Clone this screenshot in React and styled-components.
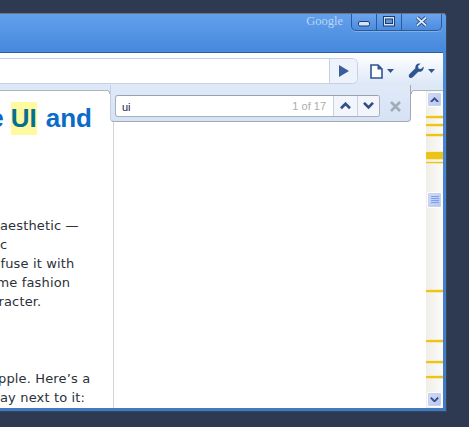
import React from "react";
import styled, { createGlobalStyle } from "styled-components";

const Global = createGlobalStyle`
  html, body { margin: 0; padding: 0; width: 469px; height: 427px; overflow: hidden; background: #2d3a52; }
  #root { width: 469px; height: 427px; }
`;

const Desktop = styled.div`
  width: 469px;
  height: 427px;
  padding-top: 13px;
  box-sizing: border-box;
  background: #2d3a52;
  overflow: hidden;
`;

const Win = styled.div`
  width: 447px;
  height: 399px;
  box-sizing: border-box;
  display: flex;
  flex-direction: column;
  background: linear-gradient(#4a8cdc, #3f7ac6);
  border-top: 1px solid #6d7480;
  border-right: 1px solid #3a4556;
  border-bottom: 1px solid #3a4556;
  border-top-right-radius: 4px;
`;

const TitleBar = styled.div`
  height: 38px;
  flex: none;
  display: flex;
  justify-content: flex-end;
  align-items: flex-start;
  background: linear-gradient(#62a0ec, #4688dc);
  border-top-right-radius: 3px;
  padding-right: 4px;
  box-sizing: border-box;
`;

const Brand = styled.span`
  font-family: "Liberation Serif", serif;
  font-size: 12.5px;
  color: #bcd5f3;
  margin: 0 8px 0 0;
`;

const WinButtons = styled.div`
  display: flex;
  height: 16px;
  box-sizing: content-box;
  border: 1px solid #2b5a9a;
  border-top: none;
  border-radius: 0 0 5px 5px;
  background: linear-gradient(#6ba5ec, #4c8bdd);
  box-shadow: 0 1px 0 #7fb0ee;
`;

const WinButton = styled.div`
  width: ${p => p.$w}px;
  box-sizing: border-box;
  display: flex;
  align-items: flex-end;
  justify-content: center;
  padding-bottom: 3px;
  & + & { border-left: 1px solid #2b5a9a; }
`;

const Body = styled.div`
  flex: 1;
  min-height: 0;
  display: flex;
  flex-direction: column;
  margin-right: 3px;
  margin-bottom: 3px;
  border-top: 1px solid #2f5f9e;
  position: relative;
`;

const Toolbar = styled.div`
  height: 32px;
  flex: none;
  box-sizing: border-box;
  display: flex;
  align-items: flex-start;
  padding-top: 5px;
  background: linear-gradient(#ffffff, #dde8f7);
`;

const Omnibox = styled.div`
  width: 358px;
  height: 26px;
  flex: none;
  box-sizing: border-box;
  display: flex;
  justify-content: flex-end;
  background: #fff;
  border: 1px solid #c6d1e6;
  border-left: none;
  border-radius: 0 6px 6px 0;
`;

const GoButton = styled.div`
  width: 27px;
  display: flex;
  align-items: center;
  justify-content: center;
  background: #eef3fb;
  border-left: 1px solid #c6d1e6;
  border-radius: 0 5px 5px 0;
`;

const ToolIcon = styled.div`
  display: flex;
  align-items: center;
  gap: ${p => p.$gap}px;
  height: 26px;
  margin-left: ${p => p.$ml}px;
`;

const Content = styled.div`
  flex: 1;
  min-height: 0;
  display: flex;
  background: #dde8f7;
  position: relative;
`;

const Page = styled.div`
  flex: 1;
  min-width: 0;
  margin-top: 5px;
  background: #fff;
  display: flex;
  justify-content: space-between;
  border-top: 1px solid #b0b4bc;
  overflow: hidden;
`;

const Article = styled.div`
  width: 114px;
  flex: none;
  box-sizing: border-box;
  border-right: 1px solid #d4d4d4;
  overflow: hidden;
`;

const Heading = styled.div`
  display: flex;
  justify-content: flex-end;
  gap: 7px;
  margin-top: 11px;
  padding-right: 21px;
  white-space: nowrap;
  font: bold 26px/33px "Liberation Sans", sans-serif;
  color: #0a6cc8;
`;

const Mark = styled.span`
  background: #fff9a0;
  color: #056f90;
  margin-right: 2px;
`;

const Para = styled.div`
  margin-top: ${p => p.$mt}px;
  font: 13px/19px "DejaVu Sans", sans-serif;
  letter-spacing: 0.15px;
  color: #2c3038;
`;

const Line = styled.div`
  white-space: nowrap;
  margin-left: ${p => p.$x || 0}px;
`;

const Scrollbar = styled.div`
  width: 17px;
  flex: none;
  box-sizing: border-box;
  padding: 1px;
  position: relative;
  display: flex;
  flex-direction: column;
  justify-content: space-between;
  background: linear-gradient(90deg, #f0eee8, #fcfbf8);
`;

const Tick = styled.div`
  position: absolute;
  left: 0;
  right: 0;
  top: ${p => p.$y}px;
  height: ${p => p.$h}px;
  background: #ecc319;
  box-shadow: 0 1px 0 #f5e9ad, 0 -1px 0 #f7efc4;
`;

const ScrollButton = styled.div`
  width: 15px;
  height: 15px;
  box-sizing: border-box;
  position: relative;
  z-index: 1;
  display: flex;
  align-items: center;
  justify-content: center;
  background: linear-gradient(135deg, #cfdcfb, #b4c6f5);
  border: 1px solid #fff;
  border-radius: 2px;
  box-shadow: 0 0 0 1px #c9d2e4 inset;
`;

const Thumb = styled(ScrollButton)`
  position: absolute;
  left: 1px;
  top: 101px;
  height: 16px;
`;

const FindBar = styled.div`
  position: absolute;
  top: 0;
  left: 110px;
  width: 301px;
  height: 37px;
  box-sizing: border-box;
  padding: 10px 0 0 4px;
  display: flex;
  align-items: flex-start;
  background: linear-gradient(#dfe9f8, #d6e3f5);
  border-bottom: 1px solid #a4a9b2;
  border-left: 1px solid #c4cfe2;
  border-right: 1px solid #a4a9b2;
  border-radius: 0 0 4px 4px;

  &::before, &::after {
    content: "";
    position: absolute;
    top: 5px;
    width: 4px;
    height: 4px;
  }
  &::before {
    left: -5px;
    background: radial-gradient(circle at 0 100%, #fff 3px, #b0b4bc 3.5px, #b0b4bc 4px, #dde8f7 4.5px);
  }
  &::after {
    right: -5px;
    background: radial-gradient(circle at 100% 100%, #fff 3px, #b0b4bc 3.5px, #b0b4bc 4px, #dde8f7 4.5px);
  }
`;

const FindInput = styled.div`
  width: 265px;
  height: 22px;
  box-sizing: border-box;
  display: flex;
  align-items: center;
  background: #fff;
  border: 1px solid #a8b0bc;
  border-top-color: #9aa2ae;
  border-radius: 3px;
`;

const Query = styled.span`
  flex: 1;
  padding: 1px 0 0 6px;
  font: 11px "Liberation Sans", sans-serif;
  color: #1a1a50;
`;

const Count = styled.span`
  font: 11px "Liberation Sans", sans-serif;
  color: #b0aca6;
  padding-right: 7px;
`;

const NavBtn = styled.div`
  width: ${p => p.$w}px;
  height: 20px;
  box-sizing: border-box;
  display: flex;
  align-items: center;
  justify-content: center;
  background: #f2f5fb;
  border-left: 1px solid #cbd3e0;
  &:last-child { border-radius: 0 2px 2px 0; }
`;

const Close = styled.div`
  display: flex;
  width: 11px;
  height: 11px;
  margin: 6px 0 0 10px;
`;

const Chevron = ({ up, color = "#2f4f86", w = 2.6, size = 11 }) => (
  <svg width={size} height={size * 0.64} viewBox="0 0 11 7">
    <path d={up ? "M1 6.2 L5.500 1.700 L10 6.200" : "M1 .800 L5.500 5.300 L10 .800"} fill="none" stroke={color} strokeWidth={w} />
  </svg>
);

const Caret = () => (
  <svg width="7" height="4" viewBox="0 0 7 4"><path d="M0 0H7L3.500 4Z" fill="#2f5590" /></svg>
);

const ticks = [[25,2],[33,2],[43,2],[61,7],[71,1],[199,2],[249,2],[270,2],[285,2]];

export default function App() {
  return (
    <Desktop>
      <Global />
      <Win>
        <TitleBar>
          <Brand>Google</Brand>
          <WinButtons>
            <WinButton $w={24}>
              <svg width="12" height="6" viewBox="0 0 12 6"><rect x=".5" y=".5" width="11" height="4.500" rx="1.500" fill="#d3e3f9" stroke="#1f3c6e" /></svg>
            </WinButton>
            <WinButton $w={25}>
              <svg width="12" height="11" viewBox="0 0 12 11"><rect x=".5" y=".5" width="11" height="9.500" fill="#d3e3f9" stroke="#1f3c6e" /><rect x="2.500" y="3" width="7" height="4.500" fill="#5b95e0" stroke="#1f3c6e" /></svg>
            </WinButton>
            <WinButton $w={40}>
              <svg width="13" height="11" viewBox="0 0 13 11"><path d="M2 1.500 L11 9.500 M11 1.500 L2 9.500" stroke="#1f3c6e" strokeWidth="3.600" /><path d="M2 1.500 L11 9.500 M11 1.500 L2 9.500" stroke="#dbe8fa" strokeWidth="1.800" /></svg>
            </WinButton>
          </WinButtons>
        </TitleBar>
        <Body>
          <Toolbar>
            <Omnibox>
              <GoButton>
                <svg width="10" height="12" viewBox="0 0 10 12"><path d="M0 0L10 6L0 12Z" fill="#3a5e9c" /></svg>
              </GoButton>
            </Omnibox>
            <ToolIcon $ml={12} $gap={4}>
              <svg width="13" height="15" viewBox="0 0 13 15"><path d="M1 1H8L12 5V14H1Z" fill="#fff" stroke="#2f5590" strokeWidth="1.600" /><path d="M7.500 1V5.500H12Z" fill="#2f5590" /></svg>
              <Caret />
            </ToolIcon>
            <ToolIcon $ml={14} $gap={3}>
              <svg width="17" height="16" viewBox="0 0 16 16"><path d="M15 3.500 L12.500 6 L10 5.500 L9.500 3 L12 .8 C9 0 6.500 2 6.800 5.200 L1 11 C0 12 0 13.500 1 14.500 C2 15.500 3.500 15 4.500 14 L9.800 8.700 C13 9.500 15.800 7 15 3.500 Z" fill="#2f5590" /></svg>
              <Caret />
            </ToolIcon>
          </Toolbar>
          <Content>
            <Page>
              <Article>
                <Heading><span>e</span><Mark>UI</Mark><span>and</span></Heading>
                <Para $mt={81}>
                  <Line>aesthetic —</Line>
                  <Line>c</Line>
                  <Line $x={0.5}>fuse it with</Line>
                  <Line $x={-3.5}>me fashion</Line>
                  <Line $x={-1.5}>racter.</Line>
                </Para>
                <Para $mt={58}>
                  <Line $x={-2}>pple. Here’s a</Line>
                  <Line>ay next to it:</Line>
                </Para>
              </Article>
              <Scrollbar>
                {ticks.map(([y, h]) => <Tick key={y} $y={y} $h={h} />)}
                <ScrollButton><Chevron up color="#3c4f80" size={9} w={2.4} /></ScrollButton>
                <Thumb>
                  <svg width="8" height="8" viewBox="0 0 8 8"><path d="M0 .5H8M0 2.500H8M0 4.500H8M0 6.500H8" stroke="#7d9fe8" /></svg>
                </Thumb>
                <ScrollButton><Chevron color="#3c4f80" size={9} w={2.4} /></ScrollButton>
              </Scrollbar>
            </Page>
            <FindBar>
              <FindInput>
                <Query>ui</Query>
                <Count>1 of 17</Count>
                <NavBtn $w={24}><Chevron up /></NavBtn>
                <NavBtn $w={22}><Chevron /></NavBtn>
              </FindInput>
              <Close>
                <svg width="11" height="11" viewBox="0 0 11 11"><path d="M1 1 L10 10 M10 1 L1 10" stroke="#a3abb8" strokeWidth="2.600" /></svg>
              </Close>
            </FindBar>
          </Content>
        </Body>
      </Win>
    </Desktop>
  );
}
